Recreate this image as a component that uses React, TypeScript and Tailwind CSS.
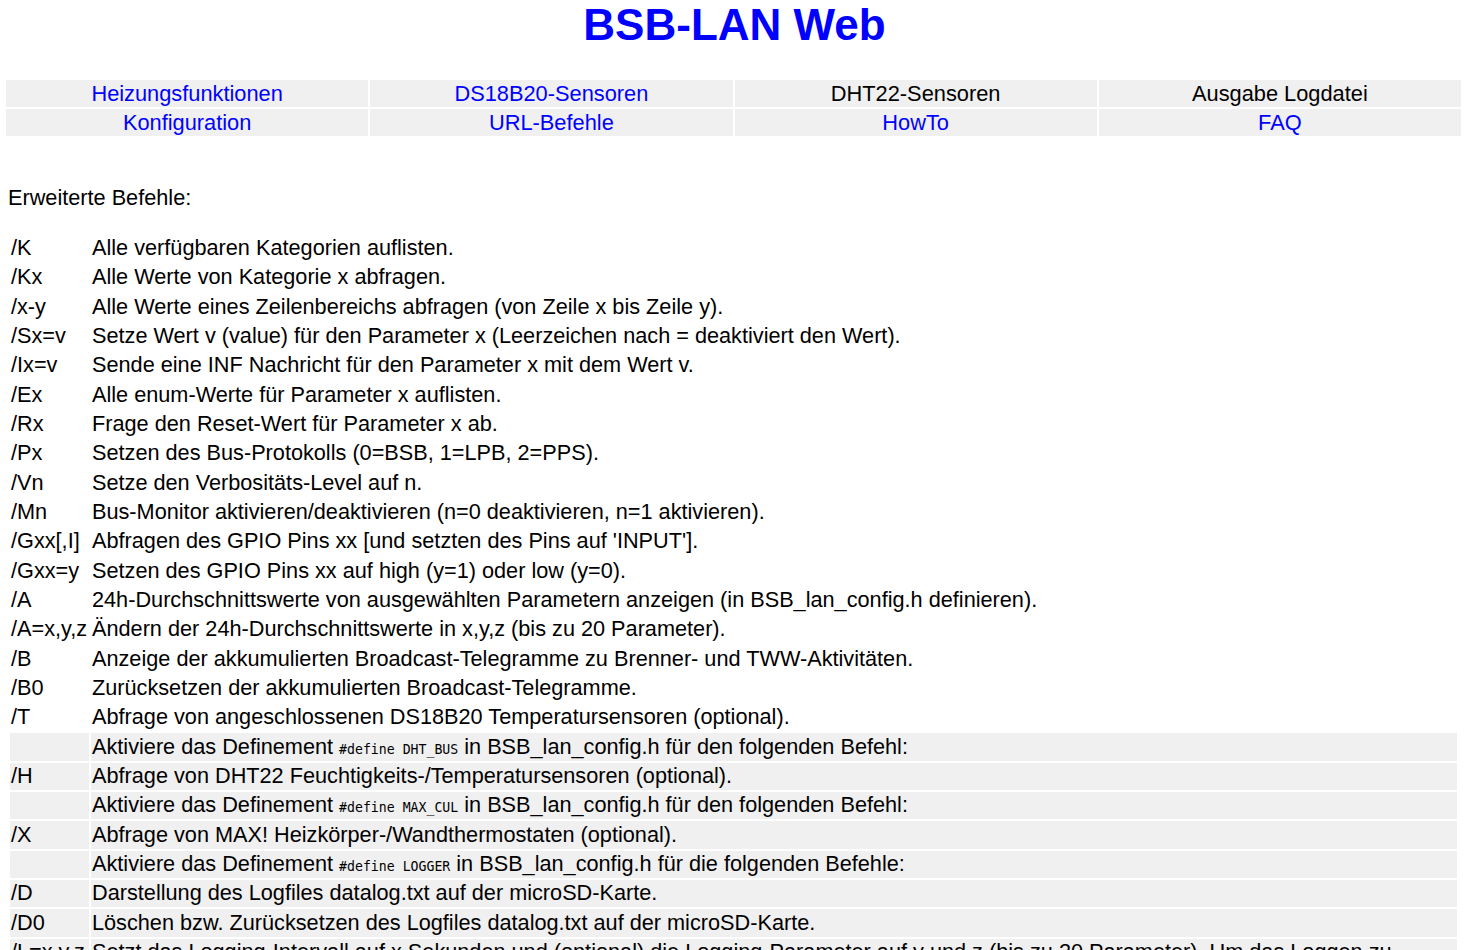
import React from "react";

type Row = { cmd: string; text: React.ReactNode; grey?: boolean };

const Code = ({ children }: { children: React.ReactNode }) => (
  <code className="text-[13.2px] leading-[0] align-baseline [font-family:'DejaVu_Sans_Mono',monospace]">{children}</code>
);

const rows: Row[] = [
  { cmd: "/K", text: "Alle verfügbaren Kategorien auflisten." },
  { cmd: "/Kx", text: "Alle Werte von Kategorie x abfragen." },
  { cmd: "/x-y", text: "Alle Werte eines Zeilenbereichs abfragen (von Zeile x bis Zeile y)." },
  { cmd: "/Sx=v", text: "Setze Wert v (value) für den Parameter x (Leerzeichen nach = deaktiviert den Wert)." },
  { cmd: "/Ix=v", text: "Sende eine INF Nachricht für den Parameter x mit dem Wert v." },
  { cmd: "/Ex", text: "Alle enum-Werte für Parameter x auflisten." },
  { cmd: "/Rx", text: "Frage den Reset-Wert für Parameter x ab." },
  { cmd: "/Px", text: "Setzen des Bus-Protokolls (0=BSB, 1=LPB, 2=PPS)." },
  { cmd: "/Vn", text: "Setze den Verbositäts-Level auf n." },
  { cmd: "/Mn", text: "Bus-Monitor aktivieren/deaktivieren (n=0 deaktivieren, n=1 aktivieren)." },
  { cmd: "/Gxx[,I]", text: "Abfragen des GPIO Pins xx [und setzten des Pins auf 'INPUT']." },
  { cmd: "/Gxx=y", text: "Setzen des GPIO Pins xx auf high (y=1) oder low (y=0)." },
  { cmd: "/A", text: "24h-Durchschnittswerte von ausgewählten Parametern anzeigen (in BSB_lan_config.h definieren)." },
  { cmd: "/A=x,y,z", text: "Ändern der 24h-Durchschnittswerte in x,y,z (bis zu 20 Parameter)." },
  { cmd: "/B", text: "Anzeige der akkumulierten Broadcast-Telegramme zu Brenner- und TWW-Aktivitäten." },
  { cmd: "/B0", text: "Zurücksetzen der akkumulierten Broadcast-Telegramme." },
  { cmd: "/T", text: "Abfrage von angeschlossenen DS18B20 Temperatursensoren (optional)." },
  {
    cmd: "",
    grey: true,
    text: (
      <>
        Aktiviere das Definement <Code>#define DHT_BUS</Code> in BSB_lan_config.h für den folgenden Befehl:
      </>
    ),
  },
  { cmd: "/H", grey: true, text: "Abfrage von DHT22 Feuchtigkeits-/Temperatursensoren (optional)." },
  {
    cmd: "",
    grey: true,
    text: (
      <>
        Aktiviere das Definement <Code>#define MAX_CUL</Code> in BSB_lan_config.h für den folgenden Befehl:
      </>
    ),
  },
  { cmd: "/X", grey: true, text: "Abfrage von MAX! Heizkörper-/Wandthermostaten (optional)." },
  {
    cmd: "",
    grey: true,
    text: (
      <>
        Aktiviere das Definement <Code>#define LOGGER</Code> in BSB_lan_config.h für die folgenden Befehle:
      </>
    ),
  },
  { cmd: "/D", grey: true, text: "Darstellung des Logfiles datalog.txt auf der microSD-Karte." },
  { cmd: "/D0", grey: true, text: "Löschen bzw. Zurücksetzen des Logfiles datalog.txt auf der microSD-Karte." },
  {
    cmd: "/L=x,y,z",
    grey: true,
    text: "Setzt das Logging-Intervall auf x Sekunden und (optional) die Logging-Parameter auf y und z (bis zu 20 Parameter). Um das Loggen zu deaktivieren, setze das Logging-Intervall auf 0.",
  },
];

const nav: { label: string; link: boolean }[] = [
  { label: "Heizungsfunktionen", link: true },
  { label: "DS18B20-Sensoren", link: true },
  { label: "DHT22-Sensoren", link: false },
  { label: "Ausgabe Logdatei", link: false },
  { label: "Konfiguration", link: true },
  { label: "URL-Befehle", link: true },
  { label: "HowTo", link: true },
  { label: "FAQ", link: true },
];

export default function App() {
  return (
    <div className="min-h-[950px] bg-white text-black text-[21.7px] leading-[24.83px] [font-family:'Liberation_Sans',Arial,sans-serif]">
      <h1 className="text-center font-bold text-[#0000ff] text-[44px] leading-[49.6px] m-0">BSB-LAN Web</h1>

      <div className="mt-[30.4px] pl-[6px] pr-[8px] grid grid-cols-4 gap-[2px] text-[21.8px]">
        {nav.map((n) => (
          <div key={n.label} className="bg-[#f0f0f0] h-[27px] pt-[1.8px] text-center">
            <a className={n.link ? "text-[#0000ff] cursor-pointer" : "text-black"}>{n.label}</a>
          </div>
        ))}
      </div>

      <div className="mt-[49.8px] pl-[8px]">Erweiterte Befehle:</div>

      <div className="mt-[24.1px] pl-[10px] pr-[12px] grid grid-cols-[79px_1fr] gap-[2px]">
        {rows.map((r, i) => {
          const last = i === rows.length - 1;
          const h = last ? "" : "h-[27.33px]";
          return (
            <React.Fragment key={i}>
              <div className={`px-[1px] py-[1.25px] whitespace-nowrap ${h} ${r.grey ? "bg-[#f0f0f0]" : ""}`}>{r.cmd}</div>
              <div className={`px-[1px] py-[1.25px] ${h} ${r.grey ? "bg-[#f0f0f0]" : ""}`}>{r.text}</div>
            </React.Fragment>
          );
        })}
      </div>
    </div>
  );
}
